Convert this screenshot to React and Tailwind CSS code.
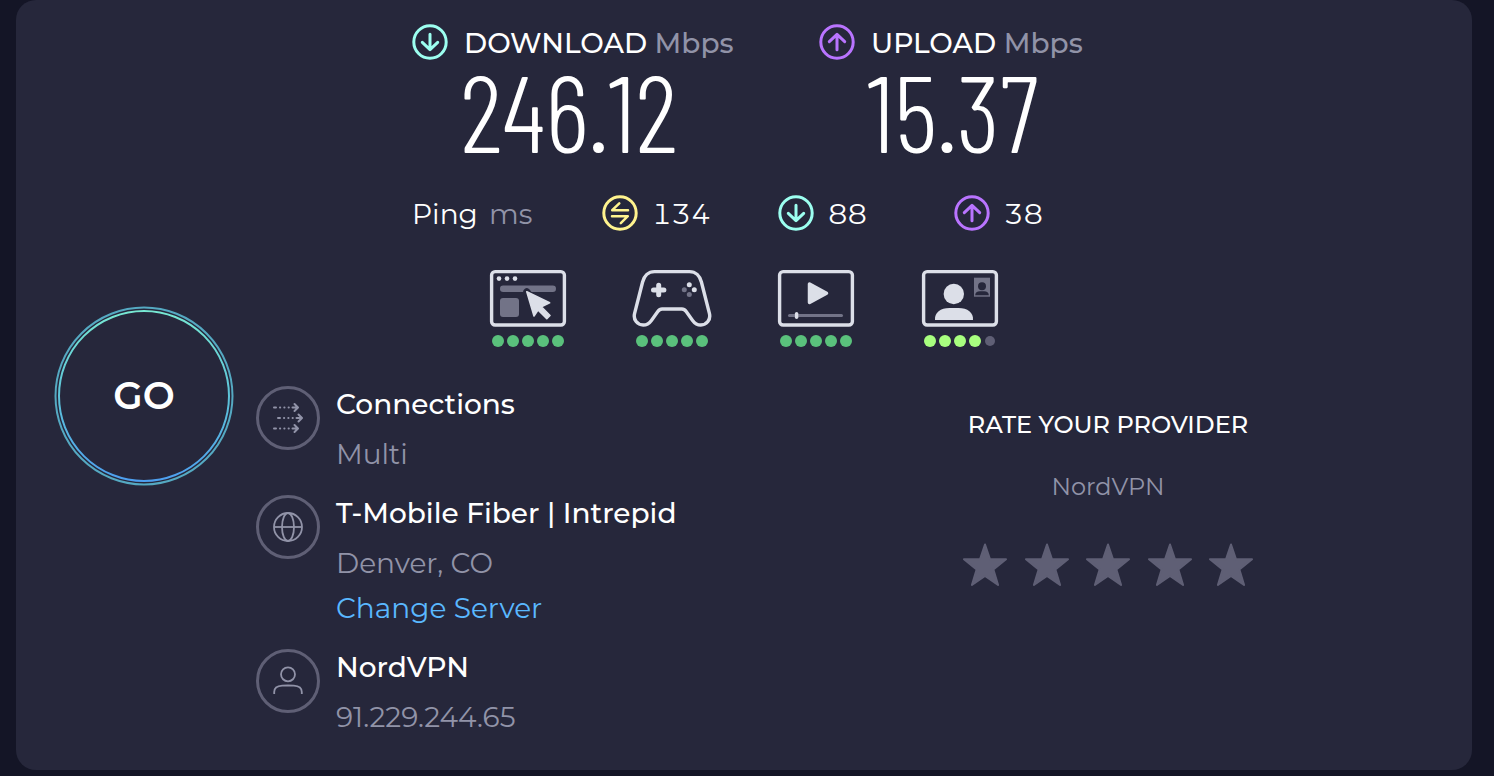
import { useState } from 'react';

function ArrowCircle({ className, up }) {
  return (
    <svg viewBox="0 0 36 36" className={`w-9 h-9 shrink-0 ${className}`} fill="none" stroke="currentColor" strokeWidth="3" strokeLinecap="round" strokeLinejoin="round">
      <circle cx="18" cy="18" r="16.2" />
      {up ? <path d="M18 25.8V11M10.3 17.6L18 10.3l7.7 7.3" /> : <path d="M18 10.2V25M10.3 18.4L18 25.7l7.7-7.3" />}
    </svg>
  );
}

function LatencyCircle() {
  return (
    <svg viewBox="0 0 36 36" className="w-9 h-9 shrink-0 text-[#fff38e]" fill="none" stroke="currentColor" strokeWidth="2.5" strokeLinecap="round" strokeLinejoin="round">
      <circle cx="18" cy="18" r="16.2" strokeWidth="3" />
      <path d="M26 15.2H10.2L17.3 8.3M10 21.2h15.8L18.8 28.2" />
    </svg>
  );
}

function BrowsingIcon() {
  return (
    <svg viewBox="0 0 80 60" className="w-20 h-[60px]" fill="none">
      <rect x="3.6" y="3.6" width="72.8" height="53.4" rx="3.5" stroke="#dcdfe8" strokeWidth="3.4" />
      <circle cx="11" cy="10.6" r="2.3" fill="#dcdfe8" />
      <circle cx="19" cy="10.6" r="2.3" fill="#dcdfe8" />
      <circle cx="27" cy="10.6" r="2.3" fill="#dcdfe8" />
      <rect x="12" y="17.5" width="56" height="6.5" rx="3.2" fill="#727387" />
      <rect x="12" y="30" width="19" height="19" rx="3" fill="#727387" />
      <path d="M38.8 23.8l4 5" stroke="#26273b" strokeWidth="7" strokeLinecap="round" />
      <path d="M38.8 23.8l22.8 11-8.2 4L62 47.5 58.8 50.7 50 42l-4 6z" fill="#dcdfe8" stroke="#dcdfe8" strokeWidth="1.6" strokeLinejoin="round" />
    </svg>
  );
}

function GamingIcon() {
  return (
    <svg viewBox="0 0 80 60" className="w-20 h-[60px]" fill="none">
      <path d="M22.5 3.6h35c6.2 0 10.4 4.4 11.9 10.4l8 31.4c1.6 6.3-2.8 11.6-8.6 11.6-3.6 0-6.1-1.7-8.2-4.6l-6.4-8.8c-1.3-1.8-2.4-2.6-4.3-2.6H30.1c-1.9 0-3 .8-4.3 2.6l-6.4 8.8c-2.1 2.9-4.6 4.6-8.2 4.6-5.8 0-10.2-5.3-8.6-11.6l8-31.4C12.1 8 16.3 3.6 22.5 3.6z" stroke="#dcdfe8" strokeWidth="3.4" strokeLinejoin="round" />
      <path d="M26.7 17.2v9.6M21.5 22h10.4" stroke="#dcdfe8" strokeWidth="5" strokeLinecap="round" />
      <circle cx="57.3" cy="16.8" r="2.5" fill="#dcdfe8" />
      <circle cx="62.3" cy="21.7" r="2.5" fill="#dcdfe8" />
      <circle cx="52.3" cy="21.7" r="2.5" fill="#727387" />
      <circle cx="57.3" cy="26.5" r="2.5" fill="#727387" />
    </svg>
  );
}

function StreamingIcon() {
  return (
    <svg viewBox="0 0 80 60" className="w-20 h-[60px]" fill="none">
      <rect x="3.6" y="3.6" width="72.8" height="53.4" rx="3.5" stroke="#dcdfe8" strokeWidth="3.4" />
      <path d="M33.5 16v18.5l17-9.2z" fill="#dcdfe8" stroke="#dcdfe8" strokeWidth="3.5" strokeLinejoin="round" />
      <path d="M13.5 47.4h52" stroke="#727387" strokeWidth="3" strokeLinecap="round" />
      <path d="M20.6 45.6v3.6" stroke="#dcdfe8" strokeWidth="3.4" strokeLinecap="round" />
    </svg>
  );
}

function VideoCallIcon() {
  return (
    <svg viewBox="0 0 80 60" className="w-20 h-[60px]" fill="none">
      <rect x="3.6" y="3.6" width="72.8" height="53.4" rx="3.5" stroke="#dcdfe8" strokeWidth="3.4" />
      <circle cx="33.8" cy="26" r="10.2" fill="#dcdfe8" />
      <path d="M15 52c-.6-7.5 5.5-12 14.5-12h9C47.5 40 53.6 44.5 53 52z" fill="#dcdfe8" />
      <rect x="54" y="9.7" width="16" height="19" fill="#727387" />
      <circle cx="62" cy="18.3" r="4" fill="#26273b" />
      <path d="M55.2 27.3c0-2.5 2-4 4.6-4h4.4c2.6 0 4.6 1.5 4.6 4z" fill="#26273b" />
    </svg>
  );
}

function Dots({ score, color }) {
  return (
    <div className="flex items-center justify-center gap-[3px]">
      {[1, 2, 3, 4, 5].map((n) => (
        <span key={n} className="w-3 h-3 flex items-center justify-center">
          <span className={`rounded-full ${n <= score ? `w-3 h-3 ${color}` : 'w-2.5 h-2.5 bg-[#5f5f75]'}`} />
        </span>
      ))}
    </div>
  );
}

function RoundIcon({ children }) {
  return (
    <div className="w-16 h-16 shrink-0 rounded-full border-3 border-[#5f5f75] flex items-center justify-center text-[#9193a8]">
      {children}
    </div>
  );
}

function ConnectionsIcon() {
  return (
    <svg viewBox="0 0 32 32" className="w-8 h-8" fill="none" stroke="currentColor" strokeWidth="2" strokeLinecap="round" strokeLinejoin="round">
      {[[0, 5.5], [4, 16], [0, 26.5]].map(([x, y]) => (
        <g key={y} transform={`translate(${x} ${y})`}>
          <path d="M2 0h2M8 0h.2M12.3 0h.2M16.6 0h.2M20.5 0h5M22.5-3.5L26 0l-3.5 3.5" />
        </g>
      ))}
    </svg>
  );
}

function GlobeIcon() {
  return (
    <svg viewBox="0 0 32 32" className="w-8 h-8" fill="none" stroke="currentColor" strokeWidth="1.8">
      <circle cx="16" cy="16" r="14" />
      <ellipse cx="16" cy="16" rx="6" ry="14" />
      <path d="M2 16h28" />
    </svg>
  );
}

function PersonIcon() {
  return (
    <svg viewBox="0 0 32 32" className="w-8 h-8" fill="none" stroke="currentColor" strokeWidth="1.8">
      <circle cx="16" cy="9.3" r="7" />
      <path d="M2.2 29v-2c0-4 3.6-6 8-6.3 4-.3 7.6-.3 11.6 0 4.4.3 8 2.3 8 6.3v2" />
    </svg>
  );
}

const speeds = [
  { label: 'DOWNLOAD', value: '246.12', color: 'text-[#9cfff0]' },
  { label: 'UPLOAD', value: '15.37', color: 'text-[#b974ff]', up: true },
];

const experiences = [
  { name: 'browsing', icon: BrowsingIcon, score: 5, color: 'bg-[#5ac17c]' },
  { name: 'gaming', icon: GamingIcon, score: 5, color: 'bg-[#5ac17c]' },
  { name: 'streaming', icon: StreamingIcon, score: 5, color: 'bg-[#5ac17c]' },
  { name: 'video', icon: VideoCallIcon, score: 4, color: 'bg-[#a8ff7f]' },
];

const details = [
  { title: 'Connections', sub: 'Multi', icon: ConnectionsIcon },
  { title: 'T-Mobile Fiber | Intrepid', sub: 'Denver, CO', icon: GlobeIcon, link: 'Change Server' },
  { title: 'NordVPN', sub: '91.229.244.65', icon: PersonIcon },
];

export default function App() {
  const [rating, setRating] = useState(0);

  return (
    <div className="min-h-screen bg-[#141526] pl-4 pr-[22px] pb-1.5 flex flex-col font-['Montserrat','Inter',sans-serif] text-[28px] leading-9 text-white">
      <main className="flex-1 bg-[#26273b] rounded-[20px] pt-6 pb-8">
        <section className="w-[664px] mx-auto leading-[38px]">
          <div className="grid grid-cols-[407px_1fr]">
            {speeds.map((s) => (
              <div key={s.label} className="flex gap-4 whitespace-nowrap">
                <ArrowCircle className={s.color} up={s.up} />
                <div>
                  <h2 className="font-medium">
                    {s.label} <span className="text-[#9193a8]">Mbps</span>
                  </h2>
                  <p className="-ml-1 font-['Barlow_Condensed','Inter',sans-serif] font-light text-[108px] leading-[96px]">{s.value}</p>
                </div>
              </div>
            ))}
          </div>

          <div className="mt-[37px] flex tabular-nums">
            <div className="w-[190px]">
              Ping <span className="ml-1 text-[#9193a8]">ms</span>
            </div>
            <div className="w-44 flex gap-3.5"><LatencyCircle />134</div>
            <div className="w-44 flex gap-3.5"><ArrowCircle className="text-[#9cfff0]" />88</div>
            <div className="flex gap-3.5"><ArrowCircle className="text-[#b974ff]" up />38</div>
          </div>

          <div className="mt-[35px] flex justify-center gap-16">
            {experiences.map((e) => (
              <div key={e.name} className="flex flex-col gap-[7px]">
                <e.icon />
                <Dots score={e.score} color={e.color} />
              </div>
            ))}
          </div>
        </section>

        <section className="mt-[39px] flex">
          <div className="w-1/2 flex items-start pl-[38px]">
            <button className="relative -mt-20 w-[180px] h-[180px] shrink-0 rounded-full text-[38px] font-semibold">
              <svg viewBox="0 0 180 180" className="absolute inset-0 w-full h-full" fill="none">
                <defs>
                  <linearGradient id="ring" x1="0" y1="0" x2="0" y2="1">
                    <stop offset="0" stopColor="#77e8d3" />
                    <stop offset="0.5" stopColor="#5dc3d8" />
                    <stop offset="1" stopColor="#4d9ff0" />
                  </linearGradient>
                </defs>
                <circle cx="90" cy="90" r="88.5" stroke="#55a9c2" strokeWidth="2" />
                <circle cx="90" cy="90" r="85" stroke="url(#ring)" strokeWidth="2" />
              </svg>
              GO
            </button>
            <div className="ml-[22px] flex flex-col gap-[23px]">
              {details.map((d) => (
                <div key={d.title} className="flex gap-4">
                  <RoundIcon><d.icon /></RoundIcon>
                  <div className="whitespace-nowrap">
                    <h3 className="font-medium">{d.title}</h3>
                    <p className="mt-3.5 text-[#9193a8]">{d.sub}</p>
                    {d.link && <a href="#" className="mt-[9px] block text-[#5ab8ff]">{d.link}</a>}
                  </div>
                </div>
              ))}
            </div>
          </div>

          <div className="w-1/2 flex flex-col items-center pt-[21px] text-2xl leading-9">
            <h3 className="font-medium">RATE YOUR PROVIDER</h3>
            <p className="mt-[26px] text-[#9193a8]">NordVPN</p>
            <div className="mt-[38px] w-[290px] flex justify-between">
              {[1, 2, 3, 4, 5].map((n) => (
                <button key={n} aria-label={`${n} of 5`} onClick={() => setRating(n)} className={n <= rating ? 'text-[#fff38e]' : 'text-[#5f5f75]'}>
                  <svg viewBox="0 0 44 44" className="w-11 h-11" fill="currentColor" stroke="currentColor" strokeWidth="2" strokeLinejoin="round">
                    <path d="M22 1.5l5 14.7h16l-12.6 10.3 4.7 15.5L22 33 8.9 42l4.7-15.5L1 16.2h16z" />
                  </svg>
                </button>
              ))}
            </div>
          </div>
        </section>
      </main>
    </div>
  );
}
